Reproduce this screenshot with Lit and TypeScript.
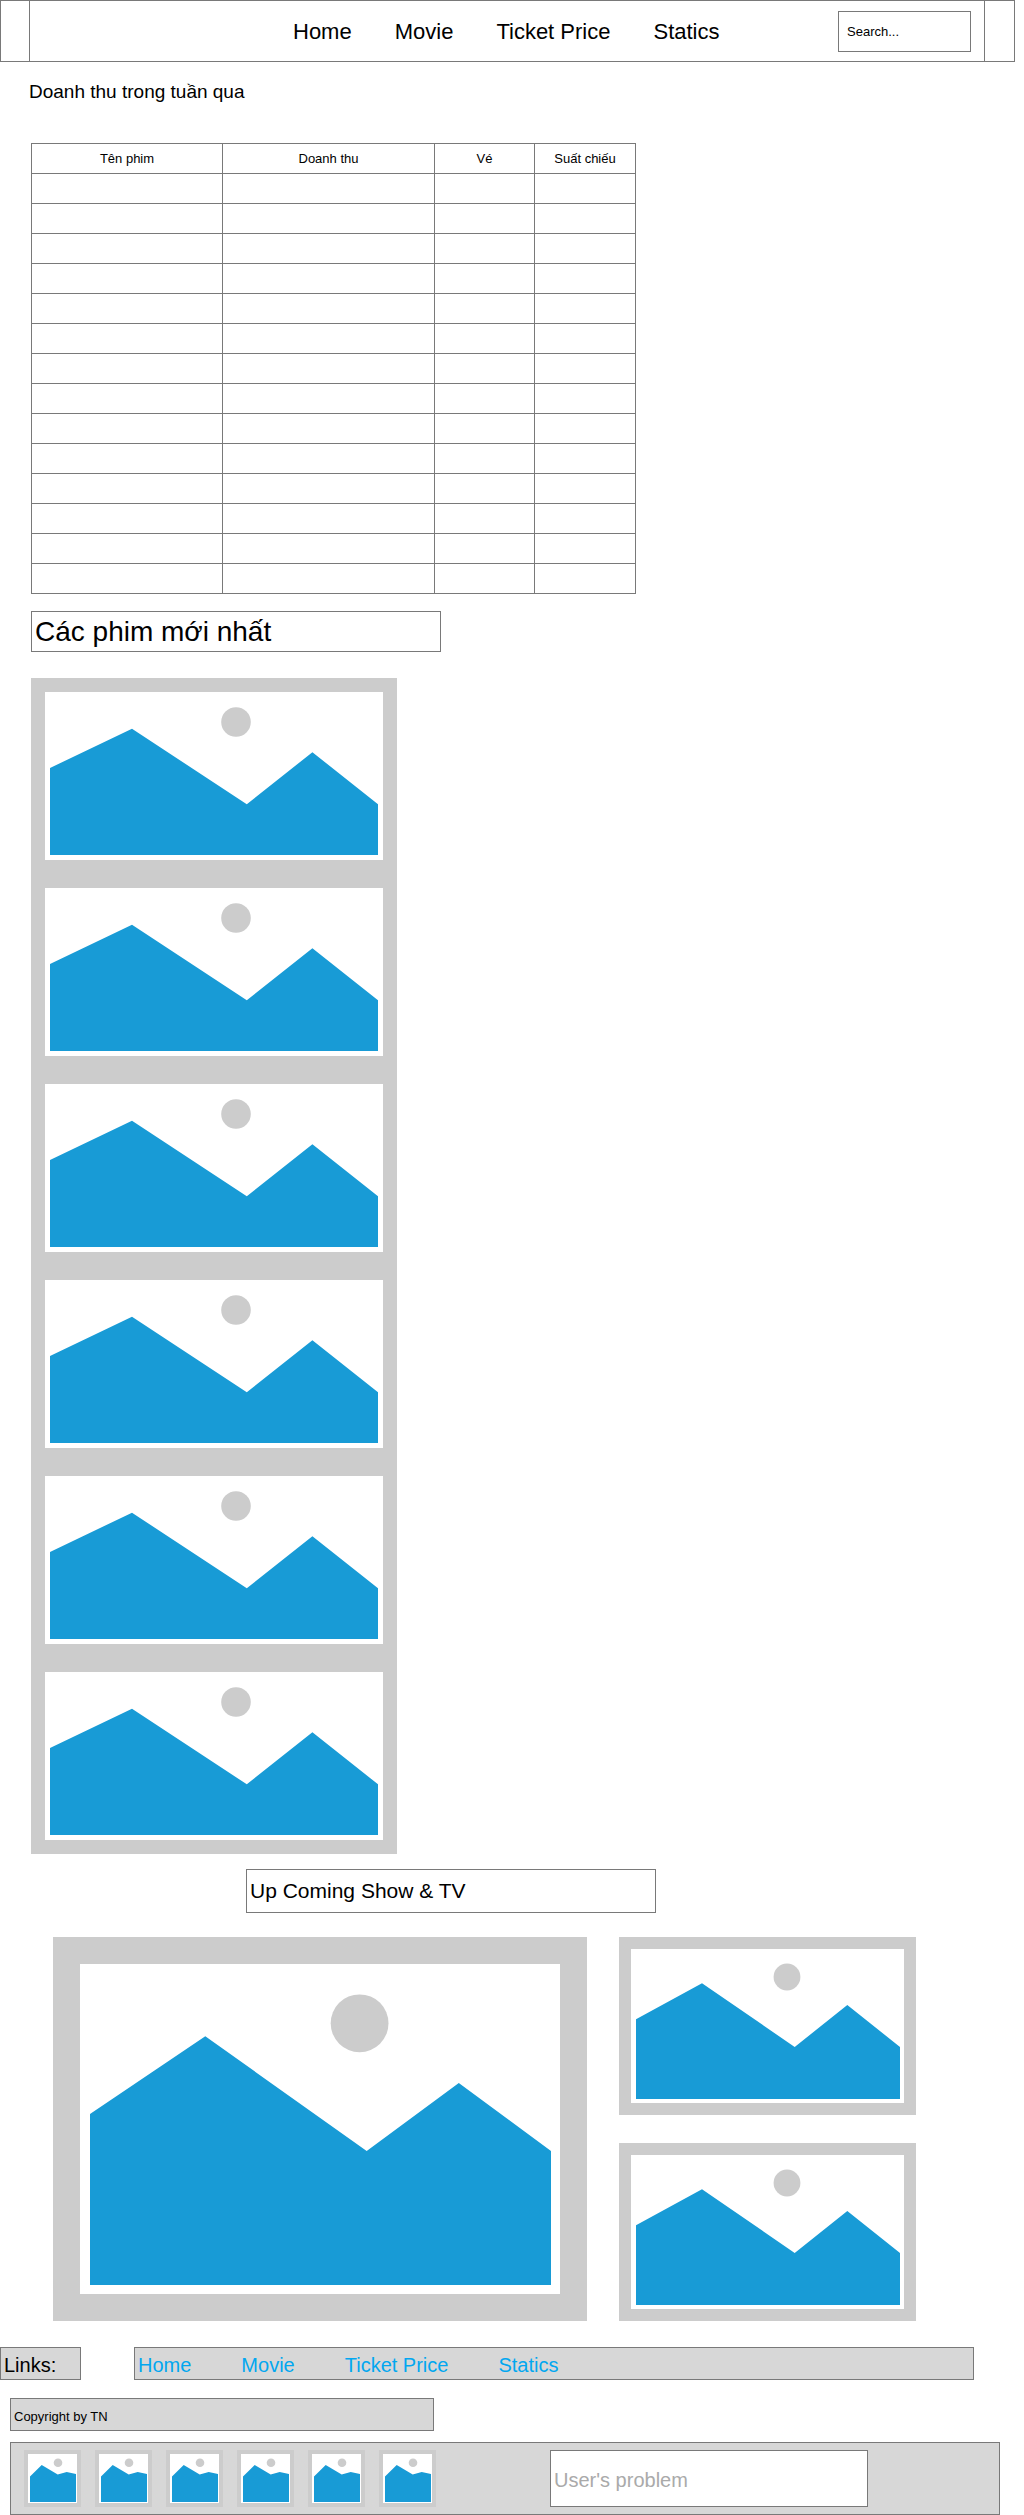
import { LitElement, html, css } from "lit";
import { customElement } from "lit/decorators.js";

interface Scene {
  width: number;
  height: number;
  frame: number;
  hills: string;
  sun: [number, number, number];
}

const POSTER: Scene = {
  width: 366,
  height: 196,
  frame: 14,
  hills: "19,177 19,90 101,50.7 215.8,126.3 281.4,74.2 347,126.3 347,177",
  sun: [205, 44, 14.8],
};

const FEATURE: Scene = {
  width: 534,
  height: 384,
  frame: 27,
  hills: "37,348 37,177 152.3,99.3 313.7,214 405.8,146 498,214 498,348",
  sun: [306.6, 86.3, 28.9],
};

const PREVIEW: Scene = {
  width: 297,
  height: 178,
  frame: 12,
  hills: "17,162 17,82.2 83,46.2 175.7,110 228.3,68 281,110 281,162",
  sun: [168, 40, 13.4],
};

const THUMB: Scene = {
  width: 57,
  height: 57,
  frame: 4,
  hills: "6,52 6,26.5 17.7,15 33.7,24.4 42.7,22 52,24 52,52",
  sun: [34, 12.7, 4.3],
};

const LINKS = ["Home", "Movie", "Ticket Price", "Statics"];
const COLUMNS = ["Tên phim", "Doanh thu", "Vé", "Suất chiếu"];

const drawScene = (s: Scene) => html`
  <svg class="scene" viewBox="0 0 ${s.width} ${s.height}" aria-hidden="true">
    <rect width=${s.width} height=${s.height} fill="#cccccc" shape-rendering="crispEdges"></rect>
    <rect
      x=${s.frame}
      y=${s.frame}
      width=${s.width - 2 * s.frame}
      height=${s.height - 2 * s.frame}
      fill="#ffffff"
      shape-rendering="crispEdges"
    ></rect>
    <circle cx=${s.sun[0]} cy=${s.sun[1]} r=${s.sun[2]} fill="#cccccc"></circle>
    <polygon points=${s.hills} fill="#189bd6"></polygon>
  </svg>
`;

const times = (n: number) => Array.from({ length: n }, (_, i) => i);

@customElement("app-root")
export class AppRoot extends LitElement {
  static styles = css`
    :host {
      display: block;
      background: #ffffff;
      color: #000000;
      font-family: "Liberation Sans", Arial, sans-serif;
      font-size: 13px;
    }
    * {
      box-sizing: border-box;
    }
    h1,
    h2,
    p {
      margin: 0;
      font-weight: 400;
    }
    a {
      color: inherit;
      text-decoration: none;
    }
    .scene {
      display: block;
      width: 100%;
      height: auto;
    }
    .header {
      display: grid;
      grid-template-columns: 29px 1fr 29px;
      margin-right: 9px;
      border: 1px solid #797979;
    }
    .bar {
      display: flex;
      align-items: center;
      justify-content: space-between;
      min-height: 60px;
      padding: 0 13px 0 263px;
      border: solid #797979;
      border-width: 0 1px;
      margin-left: -1px;
    }
    .menu {
      display: flex;
      gap: 43px;
      padding-top: 2px;
      font-size: 22px;
      line-height: 26px;
      white-space: nowrap;
    }
    .search {
      width: 133px;
      height: 41px;
      padding: 0 8px;
      border: 1px solid #797979;
      border-radius: 0;
      background: #ffffff;
      font: inherit;
      color: inherit;
    }
    .search::placeholder {
      color: #000000;
      opacity: 1;
    }
    .caption {
      margin: 19px 29px 0;
      font-size: 19px;
      line-height: 22px;
    }
    .latest {
      margin: 0 31px;
    }
    .revenue {
      width: 100%;
      max-width: 605px;
      margin-top: 40px;
      border-collapse: collapse;
      table-layout: fixed;
    }
    .revenue tr {
      height: 30px;
    }
    .revenue th,
    .revenue td {
      padding: 0;
      border: 1px solid #797979;
      font-weight: 400;
      text-align: center;
      vertical-align: middle;
    }
    .wide {
      width: 191px;
    }
    .wider {
      width: 212px;
    }
    .narrow {
      width: 100px;
    }
    .box {
      display: flex;
      align-items: center;
      width: 100%;
      max-width: 410px;
      padding: 0 3px;
      border: 1px solid #797979;
    }
    .box-latest {
      min-height: 41px;
      margin-top: 17px;
      font-size: 28px;
      line-height: 32px;
    }
    .gallery {
      max-width: 366px;
      margin-top: 26px;
    }
    .upcoming {
      padding: 15px 108px 0 53px;
    }
    .box-upcoming {
      min-height: 44px;
      margin-left: 193px;
      font-size: 21px;
      line-height: 24px;
    }
    .shows {
      display: grid;
      grid-template-columns: 534fr 297fr;
      gap: 32px;
      margin-top: 24px;
    }
    .previews {
      display: flex;
      flex-direction: column;
      justify-content: space-between;
    }
    .links {
      display: grid;
      grid-template-columns: 81px 1fr;
      gap: 53px;
      margin: 26px 50px 0 0;
      font-size: 20px;
      line-height: 23px;
    }
    .panel {
      display: flex;
      align-items: center;
      min-height: 33px;
      padding: 3px 3px 0;
      border: 1px solid #797979;
      background: #d7d7d7;
    }
    .link-list {
      gap: 50px;
      color: #02a7f0;
      white-space: nowrap;
    }
    .copyright {
      max-width: 424px;
      margin: 18px 10px 0;
    }
    .contact {
      display: grid;
      grid-template-columns: auto minmax(0, 318px);
      justify-content: space-between;
      align-items: center;
      margin: 11px 24px 0 10px;
      padding: 7px 131px 7px 13px;
      border: 1px solid #797979;
      background: #d7d7d7;
    }
    .thumbs {
      display: grid;
      grid-template-columns: repeat(6, 57px);
      gap: 14px;
    }
    .problem {
      width: 100%;
      height: 57px;
      padding: 3px 3px 0;
      border: 1px solid #797979;
      border-radius: 0;
      background: #ffffff;
      font: inherit;
      font-size: 20px;
      color: #000000;
    }
    .problem::placeholder {
      color: #aaaaaa;
      opacity: 1;
    }
  `;

  render() {
    return html`
      <header class="header">
        <span></span>
        <div class="bar">
          <nav class="menu">${LINKS.map((l) => html`<a href="#">${l}</a>`)}</nav>
          <input class="search" type="text" aria-label="Search" placeholder="Search..." />
        </div>
        <span></span>
      </header>

      <main>
        <h1 class="caption" id="revenue-title">Doanh thu trong tuần qua</h1>
        <section class="latest">
          <table class="revenue" aria-labelledby="revenue-title">
            <colgroup>
              <col class="wide" />
              <col class="wider" />
              <col class="narrow" />
              <col />
            </colgroup>
            <thead>
              <tr>
                ${COLUMNS.map((c) => html`<th scope="col">${c}</th>`)}
              </tr>
            </thead>
            <tbody>
              ${times(14).map(
                () => html`<tr>
                  ${COLUMNS.map(() => html`<td></td>`)}
                </tr>`
              )}
            </tbody>
          </table>
          <h2 class="box box-latest">Các phim mới nhất</h2>
          <div class="gallery">${times(6).map(() => drawScene(POSTER))}</div>
        </section>

        <section class="upcoming">
          <h2 class="box box-upcoming">Up Coming Show &amp; TV</h2>
          <div class="shows">
            ${drawScene(FEATURE)}
            <div class="previews">${times(2).map(() => drawScene(PREVIEW))}</div>
          </div>
        </section>
      </main>

      <footer>
        <div class="links">
          <p class="panel">Links:</p>
          <nav class="panel link-list">${LINKS.map((l) => html`<a href="#">${l}</a>`)}</nav>
        </div>
        <p class="panel copyright">Copyright by TN</p>
        <div class="contact">
          <div class="thumbs">${times(6).map(() => drawScene(THUMB))}</div>
          <input class="problem" type="text" aria-label="User's problem" placeholder="User's problem" />
        </div>
      </footer>
    `;
  }
}
